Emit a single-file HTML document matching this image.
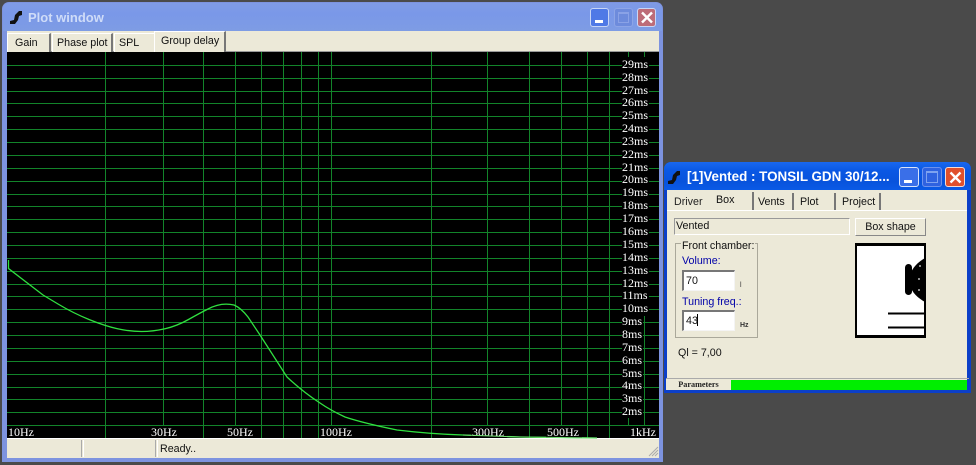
<!DOCTYPE html>
<html><head><meta charset="utf-8"><style>
html,body{margin:0;padding:0}
body{width:976px;height:465px;overflow:hidden;background:#4a4a4a;position:relative;font-family:"Liberation Sans",sans-serif;font-size:10.7px;color:#111}
.a{position:absolute;box-sizing:border-box;white-space:nowrap}
.tab{background:#ece9d8;border-right:2px solid #777;border-top:1px solid #fff;border-left:1px solid #fff;line-height:19px}
svg{position:absolute;left:0;top:0}
</style></head><body>

<!-- Plot window -->
<div class="a" style="left:2px;top:2px;width:661px;height:460px;background:#7d93df;border-radius:7px 7px 0 0"></div>
<div class="a" style="left:3px;top:3px;width:659px;height:28px;background:linear-gradient(#7f9be6,#7a98e8 40%,#7e9ce4);border-radius:6px 6px 0 0"></div>
<div class="a" style="left:28px;top:10px;font-weight:bold;font-size:13px;color:#cfdcf8">Plot window</div>
<div class="a" style="left:7px;top:31px;width:652px;height:21px;background:#ece9d8;border-bottom:1px solid #999"></div>
<div class="a tab" style="left:7px;top:33px;width:44px;height:19px;padding-left:7px">Gain</div>
<div class="a tab" style="left:52px;top:33px;width:61px;height:19px;padding-left:4px">Phase plot</div>
<div class="a tab" style="left:114px;top:33px;width:40px;height:19px;padding-left:4px;border-right:0">SPL</div>
<div class="a tab" style="left:154px;top:31px;width:72px;height:21px;padding-left:6px;line-height:19px">Group delay</div>

<div class="a" style="left:7px;top:52px;width:652px;height:386px;background:#000"></div>
<svg width="976" height="465" style="z-index:1">
<g stroke="#12842a" stroke-width="1" shape-rendering="crispEdges">
<path d="M105.5 52V438M163.5 52V438M203.5 52V438M235.5 52V438M261.5 52V438M283.5 52V438M301.5 52V438M318.5 52V438M331.5 52V438M431.5 52V438M487.5 52V438M529.5 52V438M561.5 52V438M587.5 52V438M609.5 52V438M628.5 52V438M644.5 52V438" fill="none"/>
<path d="M7 65.5H659M7 78.5H659M7 91.5H659M7 103.5H659M7 116.5H659M7 129.5H659M7 142.5H659M7 155.5H659M7 168.5H659M7 181.5H659M7 194.5H659M7 206.5H659M7 219.5H659M7 232.5H659M7 245.5H659M7 258.5H659M7 271.5H659M7 284.5H659M7 296.5H659M7 309.5H659M7 322.5H659M7 335.5H659M7 348.5H659M7 361.5H659M7 374.5H659M7 387.5H659M7 399.5H659M7 412.5H659M7 425.5H659" fill="none"/>
</g>
<path d="M8.5 260L8.5 268.5L43 295L58 304Q73 313 89 319.5Q105 326 117.5 328.75Q130 331.5 141.5 331.5Q153 331.5 165 328.75Q177 326 188.5 319.5Q200 313 208 309Q221 302 234 305Q241 308 248 317L260 335L287 377Q303 392 320 403Q330 410 345 417Q363 423 397 430Q430 434 463 435L520 437L597 438" fill="none" stroke="#30e040" stroke-width="1.3"/>
<g font-family="'Liberation Serif',serif" font-size="12px" fill="#fff">
<rect x="622" y="57" width="27" height="259" fill="#000"/>
<rect x="622" y="316" width="21" height="102" fill="#000"/>
<text x="622" y="68">29ms</text><text x="622" y="81">28ms</text><text x="622" y="94">27ms</text><text x="622" y="106">26ms</text><text x="622" y="119">25ms</text><text x="622" y="132">24ms</text><text x="622" y="145">23ms</text><text x="622" y="158">22ms</text><text x="622" y="171">21ms</text><text x="622" y="183">20ms</text><text x="622" y="196">19ms</text><text x="622" y="209">18ms</text><text x="622" y="222">17ms</text><text x="622" y="235">16ms</text><text x="622" y="248">15ms</text><text x="622" y="261">14ms</text><text x="622" y="274">13ms</text><text x="622" y="287">12ms</text><text x="622" y="299">11ms</text><text x="622" y="312">10ms</text><text x="622" y="325">9ms</text><text x="622" y="338">8ms</text><text x="622" y="351">7ms</text><text x="622" y="364">6ms</text><text x="622" y="377">5ms</text><text x="622" y="389">4ms</text><text x="622" y="402">3ms</text><text x="622" y="415">2ms</text>
</g>
<g fill="#000"><rect x="7" y="426" width="30" height="12"/><rect x="149" y="426" width="30" height="12"/><rect x="226" y="426" width="30" height="12"/><rect x="319" y="426" width="37" height="12"/><rect x="471" y="426" width="36" height="12"/><rect x="546" y="426" width="36" height="12"/><rect x="628" y="426" width="30" height="12"/></g>
<g font-family="'Liberation Serif',serif" font-size="12px" fill="#fff">
<text x="8" y="436">10Hz</text><text x="151" y="436">30Hz</text><text x="227" y="436">50Hz</text><text x="320" y="436">100Hz</text><text x="472" y="436">300Hz</text><text x="547" y="436">500Hz</text><text x="630" y="436">1kHz</text>
</g>
<path d="M463 435L520 437L597 438" stroke="#6fe070" fill="none"/>
</svg>

<!-- status bar -->
<div class="a" style="left:7px;top:438px;width:652px;height:20px;background:#ece9d8;border-top:1px solid #fff"></div>
<div class="a" style="left:81px;top:440px;width:3px;height:17px;border-left:1px solid #aaa;border-right:1px solid #fff"></div>
<div class="a" style="left:155px;top:440px;width:3px;height:17px;border-left:1px solid #aaa;border-right:1px solid #fff"></div>
<div class="a" style="left:160px;top:443px">Ready..</div>
<svg width="976" height="465" style="z-index:2"><path d="M649 456L658 447M652 456L658 450M655 456L658 453" stroke="#aaa" fill="none"/></svg>

<!-- Plot buttons -->
<div class="a" style="left:590px;top:8px;width:19px;height:19px;background:#4f79e6;border:1px solid #c8d6f6;border-radius:3px"><div class="a" style="left:4px;top:11px;width:8px;height:3px;background:#fff"></div></div>
<div class="a" style="left:614px;top:8px;width:19px;height:19px;background:#6d8bdc;border:1px solid #8da5e6;border-radius:3px"><div class="a" style="left:3px;top:3px;width:11px;height:11px;border:1px solid #8aa2e6;border-top-width:2px"></div></div>
<div class="a" style="left:637px;top:8px;width:19px;height:19px;background:#bd6c78;border:1px solid #c8d6f6;border-radius:3px"></div>
<svg width="976" height="465" style="z-index:3">
<path d="M642 12.5L652 22.5M652 12.5L642 22.5" stroke="#fff" stroke-width="2.4" fill="none"/>
<path d="M10 21l4-1 1-5 3-3 1-1 3 0 0 4-3 1-1 4-3 4-5 0z" fill="#111"/>
<path d="M668 181l4-1 1-5 3-3 1-1 3 0 0 4-3 1-1 4-3 4-5 0z" fill="#111"/>
</svg>

<!-- Vented window -->
<div class="a" style="left:664px;top:162px;width:307px;height:231px;background:#0c3fc8;border-radius:7px 7px 0 0"></div>
<div class="a" style="left:664px;top:162px;width:307px;height:28px;background:linear-gradient(#1a68ee,#0a58e4 30%,#0853dc 70%,#0a5ae6);border-radius:7px 7px 0 0"></div>
<div class="a" style="left:687px;top:169px;font-weight:bold;font-size:13.4px;color:#fff">[1]Vented : TONSIL GDN 30/12...</div>
<div class="a" style="left:899px;top:167px;width:20px;height:20px;background:#3a6fe8;border:1px solid #d8e4fb;border-radius:3px"><div class="a" style="left:4px;top:12px;width:8px;height:3px;background:#fff"></div></div>
<div class="a" style="left:922px;top:167px;width:20px;height:20px;background:#2f62e0;border:1px solid #6c92ee;border-radius:3px"><div class="a" style="left:3px;top:3px;width:12px;height:12px;border:1px solid #7ea2f0;border-top-width:2px"></div></div>
<div class="a" style="left:945px;top:167px;width:20px;height:20px;background:#e0502c;border:1px solid #f4dcd4;border-radius:3px"></div>
<svg width="976" height="465" style="z-index:3"><path d="M950.5 172.5L960.5 182.5M960.5 172.5L950.5 182.5" stroke="#fff" stroke-width="2.4" fill="none"/></svg>

<div class="a" style="left:667px;top:190px;width:300px;height:199px;background:#ece9d8"></div>
<div class="a" style="left:667px;top:210px;width:300px;height:1px;background:#fff"></div>
<div class="a" style="left:674px;top:196px;color:#222">Driver</div>
<div class="a" style="left:716px;top:194px">Box</div>
<div class="a" style="left:752px;top:192px;width:2px;height:18px;background:#777"></div>
<div class="a" style="left:758px;top:196px">Vents</div>
<div class="a" style="left:792px;top:193px;width:2px;height:17px;background:#777"></div>
<div class="a" style="left:800px;top:196px">Plot</div>
<div class="a" style="left:834px;top:193px;width:2px;height:17px;background:#777"></div>
<div class="a" style="left:842px;top:196px">Project</div>
<div class="a" style="left:879px;top:193px;width:2px;height:17px;background:#777"></div>

<div class="a" style="left:674px;top:218px;width:176px;height:17px;border:1px solid;border-color:#999 #fff #fff #999;line-height:15px;padding-left:1px">Vented</div>
<div class="a" style="left:855px;top:218px;width:71px;height:18px;background:#ece9d8;border:1px solid;border-color:#fff #888 #888 #fff;text-align:center;line-height:16px">Box shape</div>

<div class="a" style="left:675px;top:243px;width:83px;height:95px;border:1px solid #aaa89a"></div>
<div class="a" style="left:681px;top:240px;background:#ece9d8;padding:0 1px">Front chamber:</div>
<div class="a" style="left:682px;top:255px;color:#0000a8">Volume:</div>
<div class="a" style="left:682px;top:270px;width:53px;height:21px;background:#fff;border:1px solid;border-color:#777 #f4f4f4 #f4f4f4 #777;border-width:2px 1px 1px 2px;padding-left:2px;line-height:19px">70</div>
<div class="a" style="left:740px;top:282px;font-size:7px;color:#333">l</div>
<div class="a" style="left:682px;top:296px;color:#0000a8">Tuning freq.:</div>
<div class="a" style="left:682px;top:310px;width:53px;height:21px;background:#fff;border:1px solid;border-color:#777 #f4f4f4 #f4f4f4 #777;border-width:2px 1px 1px 2px;padding-left:2px;line-height:19px">43</div>
<div class="a" style="left:697px;top:314px;width:1px;height:12px;background:#000"></div>
<div class="a" style="left:740px;top:322px;font-size:7px;font-weight:bold;color:#333">Hz</div>
<div class="a" style="left:678px;top:347px">Ql = 7,00</div>

<div class="a" style="left:855px;top:243px;width:71px;height:95px;background:#fff;border:solid #000;border-width:3px 1px 3px 2px;border-right:2px solid #000"></div>
<svg width="976" height="465" style="z-index:3">
<path d="M925 258C918 262 912 268 910 275L910 285C912 293 918 298 925 302Z" fill="#000"/>
<rect x="905" y="264" width="7" height="31" rx="3.5" fill="#000"/>
<path d="M888 313.5H924M888 327.5H924" stroke="#000" stroke-width="2" fill="none"/>
<path d="M920 265v2M919 278v2M919 289v2" stroke="#bbb" stroke-width="1.5"/>
</svg>

<div class="a" style="left:666px;top:378px;width:303px;height:1px;background:#aaa"></div>
<div class="a" style="left:666px;top:379px;width:65px;height:11px;background:#ece9d8;font-family:'Liberation Serif',serif;font-size:8.2px;font-weight:bold;text-align:center;line-height:12px;color:#222">Parameters</div>
<div class="a" style="left:731px;top:380px;width:236px;height:10px;background:#00ee00"></div>
</body></html>
